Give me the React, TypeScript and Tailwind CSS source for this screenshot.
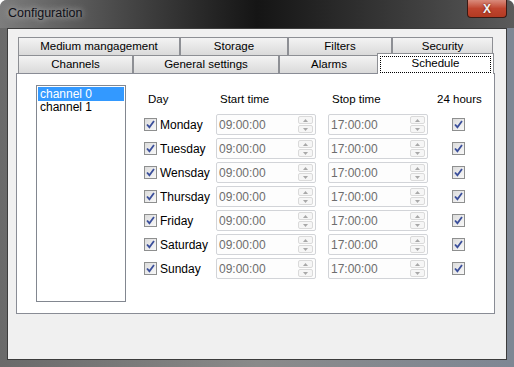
import React from "react"

const days = ["Monday", "Tuesday", "Wensday", "Thursday", "Friday", "Saturday", "Sunday"]

function Check() {
  return (
    <span className="flex h-[13px] w-[13px] shrink-0 items-center justify-center border border-[#8e8f8f] bg-gradient-to-br from-[#dcdcdc] to-[#f8f8f8]">
      <svg width="9" height="9" viewBox="0 0 9 9">
        <path d="M1 4.5 L3.4 7.2 L8 1" fill="none" stroke="#3b4f9b" strokeWidth="1.8" />
      </svg>
    </span>
  )
}

function Spin() {
  return (
    <span className="flex h-[17px] w-[15px] flex-col gap-[1px]">
      <span className="flex h-[8px] items-center justify-center rounded-[2px] border border-[#dadada] bg-[#f6f6f6]">
        <svg width="5" height="3" viewBox="0 0 5 3">
          <path d="M0 3 L2.5 0 L5 3 Z" fill="#a8a8a8" />
        </svg>
      </span>
      <span className="flex h-[8px] items-center justify-center rounded-[2px] border border-[#dadada] bg-[#f6f6f6]">
        <svg width="5" height="3" viewBox="0 0 5 3">
          <path d="M0 0 L2.5 3 L5 0 Z" fill="#a8a8a8" />
        </svg>
      </span>
    </span>
  )
}

function TimeField({ value }: { value: string }) {
  return (
    <div className="flex h-[21px] w-[100px] items-center justify-between rounded-[2px] border border-[#d2d4d8] bg-[#fdfdfd] pl-[2px] pr-[2px] text-[12px] text-[#6d6d6d]">
      <span>{value}</span>
      <Spin />
    </div>
  )
}

function Tab({ label, w }: { label: string; w: string }) {
  return (
    <div
      className={`${w} flex h-[18px] items-center justify-center border border-b-0 border-[#8d8f94] bg-gradient-to-b from-[#f3f3f3] to-[#dadada]`}
    >
      {label}
    </div>
  )
}

export default function App() {
  return (
    <div
      className="relative h-[367px] w-[514px] overflow-hidden rounded-t-[7px] bg-gradient-to-r from-[#6a6a6a] via-[#8a8a8a] to-[#7e8794] px-[7px] pb-[7px] text-[11.5px] text-black"
      style={{ fontFamily: '"Liberation Sans", Arial, sans-serif' }}
    >
      {/* title bar */}
      <div className="-mx-[7px] flex h-[28px] items-center bg-gradient-to-r from-[#7d7d7d] via-[#151515] to-[#5b5b5b] pl-[8px] pb-[2px]">
        <span className="text-[12.5px] text-[#101018] [text-shadow:0_0_6px_#d8d8d8]">Configuration</span>
      </div>
      <div className="absolute right-[7px] top-0 flex h-[18px] w-[40px] items-center justify-center rounded-b-[4px] border border-t-0 border-[#3a1a14] bg-gradient-to-b from-[#d98b7c] via-[#c0452f] to-[#b33a22]">
        <span className="text-[12px] font-bold text-[#f2f2f2] [text-shadow:0_0_2px_#5a1000]">X</span>
      </div>

      {/* client */}
      <div className="h-[332px] border border-[#3c3c3c] bg-[#f0f0f0] pl-[8px] pt-[8px]">
        <div className="w-[479px]">
          <div className="flex pl-[2px]">
            <Tab label="Medium mangagement" w="w-[162px]" />
            <Tab label="Storage" w="w-[108px]" />
            <Tab label="Filters" w="w-[104px]" />
            <Tab label="Security" w="w-[101px]" />
          </div>
          <div className="flex items-end pl-[2px]">
            <Tab label="Channels" w="w-[115px]" />
            <Tab label="General settings" w="w-[146px]" />
            <Tab label="Alarms" w="w-[100px]" />
            <div className="relative z-10 -mb-[1px] -ml-[2px] -mt-[2px] flex h-[21px] w-[117px] items-center justify-center border border-b-0 border-[#8d8f94] bg-white px-[2px] pt-[1px]">
              <div className="flex h-[17px] w-full items-center justify-center border border-dotted border-black pb-[2px]">
                Schedule
              </div>
            </div>
          </div>

          {/* panel */}
          <div className="flex h-[241px] border border-[#898c95] bg-white pl-[19px] pt-[11px]">
            <div className="h-[217px] w-[90px] border border-[#828790] p-[1px] text-[12px]">
              <div className="h-[14px] bg-[#3399ff] pl-[2px] leading-[14px] text-white">channel 0</div>
              <div className="h-[13px] pl-[2px] leading-[13px]">channel 1</div>
            </div>

            <div className="ml-[18px] pt-[7px]">
              <div className="flex h-[16px] items-center">
                <span className="w-[72px] pl-[4px]">Day</span>
                <span className="w-[112px] pl-[4px]">Start time</span>
                <span className="w-[109px] pl-[4px]">Stop time</span>
                <span>24 hours</span>
              </div>
              <div className="mt-[6px] flex flex-col gap-[3px]">
                {days.map((d) => (
                  <div key={d} className="flex h-[21px] items-center">
                    <div className="flex w-[72px] items-center gap-[3px]">
                      <Check />
                      <span className="text-[12px]">{d}</span>
                    </div>
                    <TimeField value="09:00:00" />
                    <div className="w-[12px]" />
                    <TimeField value="17:00:00" />
                    <div className="ml-[24px]">
                      <Check />
                    </div>
                  </div>
                ))}
              </div>
            </div>
          </div>
        </div>
      </div>
    </div>
  )
}
